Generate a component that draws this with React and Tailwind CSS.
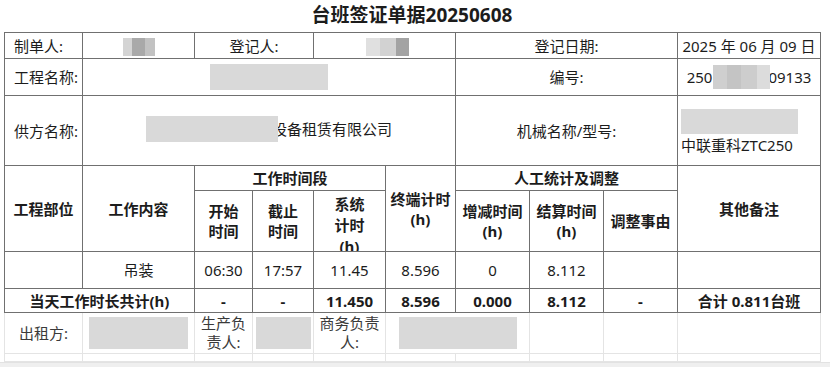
const cell = "border border-[#707070] text-center align-middle p-0";
const head = "border border-[#707070] text-center align-middle p-0 font-bold";
const soft = "border border-[#e4e4e4] text-center align-middle p-0 text-[#3a3a3a]";

const Blur = ({ className }) => <span className={"inline-block bg-[#d9d9d9] align-middle " + className} />;

const Mosaic = ({ parts }) => (
  <span className="inline-flex align-middle">
    {parts.map(([w, c], i) => (
      <span key={i} className={"inline-block h-[18px] " + w + " " + c} />
    ))}
  </span>
);

const App = () => {
  return (
    <div className="w-[830px] h-[367px] bg-white overflow-hidden font-['Noto_Sans','Noto_Sans_CJK_SC',sans-serif] text-[#1c1c1c]">
      <div className="pl-[4px]">
        <div className="w-[816px] h-[32px] flex items-center justify-center text-[19px] font-bold leading-none pb-[2px]">
          台班签证单据20250608
        </div>
        <table className="w-[816px] table-fixed border-collapse text-[15px] leading-[20px]">
          <colgroup>
            <col className="w-[78px]" />
            <col className="w-[112px]" />
            <col className="w-[58px]" />
            <col className="w-[61px]" />
            <col className="w-[72px]" />
            <col className="w-[70px]" />
            <col className="w-[74px]" />
            <col className="w-[74px]" />
            <col className="w-[74px]" />
            <col className="w-[143px]" />
          </colgroup>
          <tbody>
            <tr className="h-[26px]">
              <td className={cell + " text-left pl-[9px]"}>制单人:</td>
              <td className={cell}>
                <Mosaic parts={[["w-[9px]", "bg-[#d4d4d4]"], ["w-[13px]", "bg-[#a9a9a9]"], ["w-[10px]", "bg-[#c2c2c2]"]]} />
              </td>
              <td colSpan={2} className={cell}>登记人:</td>
              <td colSpan={2} className={cell}>
                <span className="ml-[6px]">
                  <Mosaic parts={[["w-[14px]", "bg-[#e0e0e0]"], ["w-[16px]", "bg-[#d2d2d2]"], ["w-[13px]", "bg-[#a3a3a3]"]]} />
                </span>
              </td>
              <td colSpan={3} className={cell}>登记日期:</td>
              <td className={cell + " whitespace-nowrap"}>2025 年 06 月 09 日</td>
            </tr>
            <tr className="h-[37px]">
              <td className={cell + " text-left pl-[9px]"}>工程名称:</td>
              <td colSpan={5} className={cell}>
                <Blur className="w-[118px] h-[26px]" />
              </td>
              <td colSpan={3} className={cell}>编号:</td>
              <td className={cell + " whitespace-nowrap"}>
                <span className="inline-flex items-center">
                  <span>250</span>
                  <span className="inline-flex h-[24px] ml-[1px] mr-[-2px] relative">
                    <span className="w-[14px] bg-[#cfcfcf]" />
                    <span className="w-[14px] bg-[#c4c4c4]" />
                    <span className="w-[16px] bg-[#cdcdcd]" />
                    <span className="w-[13px] bg-[#dcdcdc]" />
                  </span>
                  <span>09133</span>
                </span>
              </td>
            </tr>
            <tr className="h-[70px]">
              <td className={cell + " text-left pl-[9px]"}>供方名称:</td>
              <td colSpan={5} className={cell}>
                <span className="inline-flex items-center">
                  <Blur className="w-[132px] h-[26px] relative z-10" />
                  <span className="ml-[-6px]">设备租赁有限公司</span>
                </span>
              </td>
              <td colSpan={3} className={cell}>机械名称/型号:</td>
              <td className={cell + " text-left whitespace-nowrap"}>
                <div className="flex flex-col items-start pl-[3px] pt-[2px]">
                  <Blur className="w-[117px] h-[25px]" />
                  <span className="mt-[1px]">中联重科ZTC250</span>
                </div>
              </td>
            </tr>
            <tr className="h-[25px]">
              <td rowSpan={2} className={head}>工程部位</td>
              <td rowSpan={2} className={head}>工作内容</td>
              <td colSpan={3} className={head}>工作时间段</td>
              <td rowSpan={2} className={head}>终端计时<br />(h)</td>
              <td colSpan={3} className={head}>人工统计及调整</td>
              <td rowSpan={2} className={head}>其他备注</td>
            </tr>
            <tr className="h-[61px]">
              <td className={head}>开始<br />时间</td>
              <td className={head}>截止<br />时间</td>
              <td className={head}>
                <div className="h-[60px] overflow-hidden pt-[3px] leading-[21px]">系统<br />计时<br />(h)</div>
              </td>
              <td className={head}>增减时间<br />(h)</td>
              <td className={head}>结算时间<br />(h)</td>
              <td className={head}>调整事由</td>
            </tr>
            <tr className="h-[37px]">
              <td className={cell}></td>
              <td className={cell}>吊装</td>
              <td className={cell}>06:30</td>
              <td className={cell}>17:57</td>
              <td className={cell}>11.45</td>
              <td className={cell}>8.596</td>
              <td className={cell}>0</td>
              <td className={cell}>8.112</td>
              <td className={cell}></td>
              <td className={cell}></td>
            </tr>
            <tr className="h-[24px]">
              <td colSpan={2} className={head}>当天工作时长共计(h)</td>
              <td className={head}>-</td>
              <td className={head}>-</td>
              <td className={head}>11.450</td>
              <td className={head}>8.596</td>
              <td className={head}>0.000</td>
              <td className={head}>8.112</td>
              <td className={head}>-</td>
              <td className={head}>合计 0.811台班</td>
            </tr>
            <tr className="h-[41px] leading-[19px]">
              <td className={soft}>出租方:</td>
              <td className={soft}>
                <Blur className="w-[99px] h-[32px]" />
              </td>
              <td className={soft}>生产负<br />责人:</td>
              <td className={soft}>
                <Blur className="w-[55px] h-[32px]" />
              </td>
              <td className={soft}>商务负责<br />人:</td>
              <td colSpan={2} className={soft + " text-left"}>
                <Blur className="ml-[13px] w-[118px] h-[32px]" />
              </td>
              <td className={soft}></td>
              <td className={soft}></td>
              <td className={soft}></td>
            </tr>
            <tr className="h-[8px]">
              <td className={soft}></td>
              <td className={soft}></td>
              <td className={soft}></td>
              <td className={soft}></td>
              <td className={soft}></td>
              <td className={soft}></td>
              <td className={soft}></td>
              <td className={soft}></td>
              <td className={soft}></td>
              <td className={soft}></td>
            </tr>
          </tbody>
        </table>
      </div>
      <div className="h-[10px] bg-[#efefef] border-t border-[#e2e2e2]" />
    </div>
  );
};

export default App;
